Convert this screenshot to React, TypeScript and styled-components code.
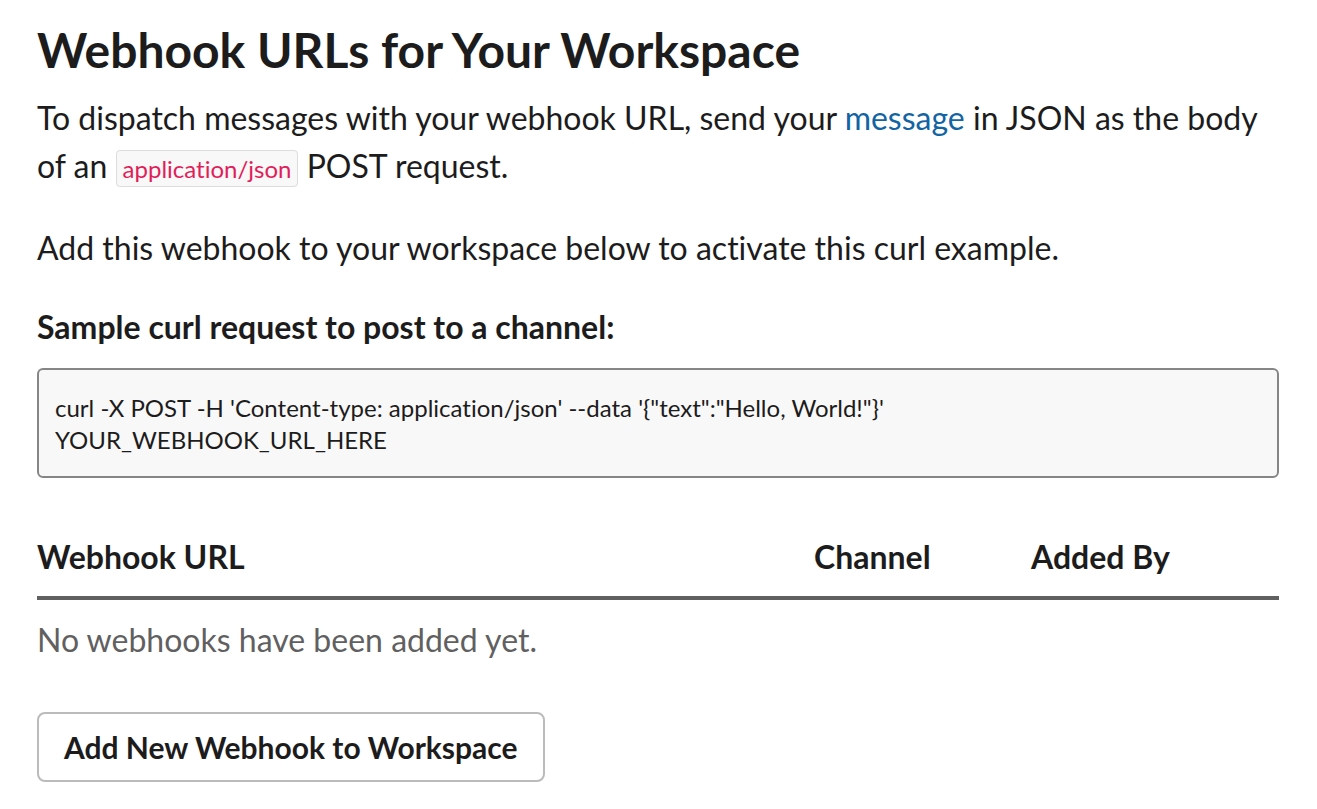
import styled, { createGlobalStyle } from "styled-components";

const GlobalStyle = createGlobalStyle`
  body {
    margin: 0;
    background: #ffffff;
    font-family: Lato, "Open Sans", sans-serif;
    color: #1d1c1d;
    font-variant-ligatures: no-common-ligatures;
  }
`;

const Page = styled.div`
  width: 1242px;
  padding: 20px 0 0 37px;
`;

const Title = styled.h1`
  margin: 0 0 14px;
  font-size: 48px;
  font-weight: 700;
  line-height: 60px;
`;

const Para = styled.p`
  margin: 0 0 31px;
  font-size: 32px;
  line-height: 48px;
`;

const Link = styled.a`
  color: #1264a3;
  text-decoration: none;
`;

const InlineCode = styled.code`
  font-family: Lato, sans-serif;
  font-size: 24px;
  color: #e01e5a;
  background: #f8f8f8;
  border: 1px solid #dddddd;
  border-radius: 4px;
  padding: 3px 6px;
`;

const SubTitle = styled.h3`
  margin: 0 0 20px;
  padding-top: 3px;
  font-size: 32px;
  font-weight: 700;
  line-height: 42px;
`;

const CodeBox = styled.pre`
  margin: 0 0 58px;
  padding: 22px 16px 20px;
  background: #f8f8f8;
  border: 2px solid #868686;
  border-radius: 6px;
  font-family: Lato, sans-serif;
  font-size: 24px;
  line-height: 32px;
  white-space: pre-wrap;
`;

const HeadRow = styled.div`
  display: grid;
  grid-template-columns: 777px 217px 1fr;
  padding-bottom: 18px;
  border-bottom: 4px solid #616061;
`;

const HeadCell = styled.div`
  font-size: 32px;
  font-weight: 700;
  line-height: 42px;
`;

const Empty = styled.div`
  margin: 19px 0 51px;
  font-size: 32px;
  line-height: 42px;
  color: #616061;
`;

const Button = styled.button`
  height: 70px;
  padding: 0 25px;
  background: #ffffff;
  border: 2px solid #bbbbbb;
  border-radius: 8px;
  font-family: Lato, sans-serif;
  font-size: 30px;
  font-weight: 700;
  color: #1d1c1d;
  cursor: pointer;
`;

export default function App() {
  return (
    <>
      <GlobalStyle />
      <Page>
        <Title>Webhook URLs for Your Workspace</Title>
        <Para>
          To dispatch messages with your webhook URL, send your{" "}
          <Link href="#">message</Link> in JSON as the body of an{" "}
          <InlineCode>application/json</InlineCode> POST request.
        </Para>
        <Para>Add this webhook to your workspace below to activate this curl example.</Para>
        <SubTitle>Sample curl request to post to a channel:</SubTitle>
        <CodeBox>
          {`curl -X POST -H 'Content-type: application/json' --data '{"text":"Hello, World!"}'\nYOUR_WEBHOOK_URL_HERE`}
        </CodeBox>
        <HeadRow>
          <HeadCell>Webhook URL</HeadCell>
          <HeadCell>Channel</HeadCell>
          <HeadCell>Added By</HeadCell>
        </HeadRow>
        <Empty>No webhooks have been added yet.</Empty>
        <Button>Add New Webhook to Workspace</Button>
      </Page>
    </>
  );
}
